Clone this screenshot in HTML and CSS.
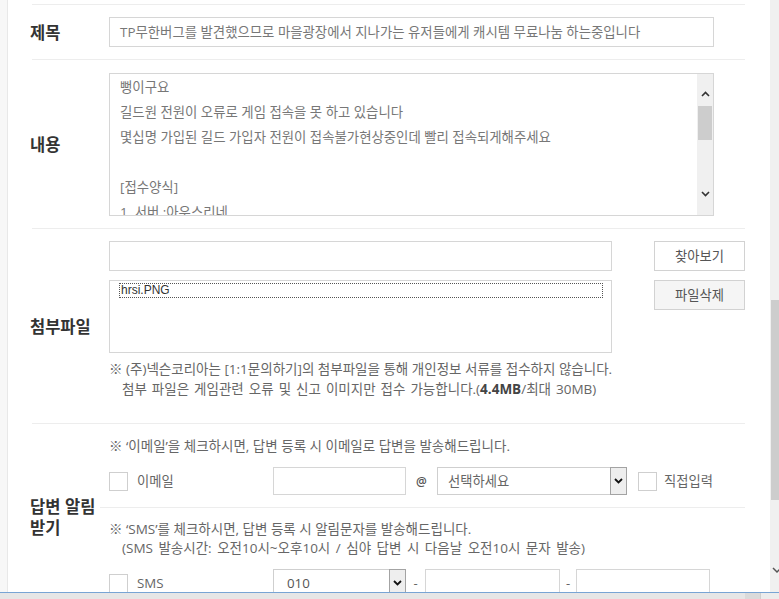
FILE: index.html
```html
<!DOCTYPE html>
<html lang="ko">
<head>
<meta charset="utf-8">
<title>1:1 문의하기</title>
<link rel="stylesheet" href="styles.css">
</head>
<body>
<div class="window">
  <div class="viewport">
    <div class="edge"></div>
    <main class="main">
      <div class="form">
        <div class="row row-title">
          <div class="label">제목</div>
          <div class="cell">
            <div class="input title-input">TP무한버그를 발견했으므로 마을광장에서 지나가는 유저들에게 캐시템 무료나눔 하는중입니다</div>
          </div>
        </div>

        <div class="row row-content">
          <div class="label">내용</div>
          <div class="cell">
            <div class="textarea">
              <div class="ta-text">
                <div class="ta-line">뻥이구요</div>
                <div class="ta-line">길드원 전원이 오류로 게임 접속을 못 하고 있습니다</div>
                <div class="ta-line">몇십명 가입된 길드 가입자 전원이 접속불가현상중인데 빨리 접속되게해주세요</div>
                <div class="ta-line">&nbsp;</div>
                <div class="ta-line">[접수양식]</div>
                <div class="ta-line">1. 서버 :아우스리네</div>
              </div>
              <div class="ta-scroll">
                <div class="ta-btn ta-up">
                  <svg width="9" height="6" viewBox="0 0 9 6"><polyline points="1,5 4.5,1.5 8,5" fill="none" stroke="#333" stroke-width="1.6"/></svg>
                </div>
                <div class="ta-thumb"></div>
                <div class="ta-gap"></div>
                <div class="ta-btn ta-down">
                  <svg width="9" height="6" viewBox="0 0 9 6"><polyline points="1,1 4.5,4.5 8,1" fill="none" stroke="#333" stroke-width="1.6"/></svg>
                </div>
              </div>
            </div>
          </div>
        </div>

        <div class="row row-attach">
          <div class="label">첨부파일</div>
          <div class="cell">
            <div class="attach-grid">
              <div class="input file-input"></div>
              <div class="btn btn-white">찾아보기</div>
              <div class="input listbox"><span class="list-item">hrsi.PNG</span></div>
              <div class="btn btn-gray">파일삭제</div>
            </div>
            <div class="notes">
              <div class="note-line">※ (주)넥슨코리아는 [1:1문의하기]의 첨부파일을 통해 개인정보 서류를 접수하지 않습니다.</div>
              <div class="note-line indent wide">첨부 파일은 게임관련 오류 및 신고 이미지만 접수 가능합니다.(<b>4.4MB</b>/최대 30MB)</div>
            </div>
          </div>
        </div>

        <div class="row row-answer">
          <div class="label">답변 알림 받기</div>
          <div class="cell answer">
            <div class="block">
              <div class="note-line">※ ‘이메일’을 체크하시면, 답변 등록 시 이메일로 답변을 발송해드립니다.</div>
              <div class="ctrl-row">
                <div class="check-wrap"><span class="checkbox"></span><span class="ctrl-text">이메일</span></div>
                <div class="input ctrl-input w-email"></div>
                <span class="at">@</span>
                <div class="select w-domain">
                  <span class="select-text">선택하세요</span>
                  <span class="select-arrow"><svg width="9" height="6" viewBox="0 0 9 6"><polyline points="1,1 4.5,4.5 8,1" fill="none" stroke="#111" stroke-width="1.8"/></svg></span>
                </div>
                <span class="checkbox cb-direct"></span><span class="ctrl-text direct">직접입력</span>
              </div>
            </div>
            <div class="block">
              <div class="note-line sms">※ ‘SMS’를 체크하시면, 답변 등록 시 알림문자를 발송해드립니다.</div>
              <div class="note-line sms indent wider">(SMS 발송시간: 오전10시~오후10시 / 심야 답변 시 다음날 오전10시 문자 발송)</div>
              <div class="ctrl-row">
                <div class="check-wrap"><span class="checkbox"></span><span class="ctrl-text">SMS</span></div>
                <div class="select w-phone1">
                  <span class="select-text dark">010</span>
                  <span class="select-arrow"><svg width="9" height="6" viewBox="0 0 9 6"><polyline points="1,1 4.5,4.5 8,1" fill="none" stroke="#111" stroke-width="1.8"/></svg></span>
                </div>
                <span class="dash d1">-</span>
                <div class="input ctrl-input w-phone2"></div>
                <span class="dash d2">-</span>
                <div class="input ctrl-input w-phone3"></div>
              </div>
            </div>
          </div>
        </div>
      </div>
    </main>
    <div class="vscroll">
      <div class="vs-thumb"></div>
      <div class="vs-gap"></div>
      <div class="vs-down"><svg width="9" height="8" viewBox="0 0 9 8"><polyline points="3,2 7,6 11,2" fill="none" stroke="#555" stroke-width="1.5"/></svg></div>
    </div>
  </div>
  <div class="statusbar">
    <div class="sb-fill"></div>
    <div class="sb-seg1"></div>
    <div class="sb-seg2"></div>
  </div>
</div>
</body>
</html>
```

FILE: styles.css
```css
* { box-sizing: border-box; }
html, body { margin: 0; padding: 0; }
body {
  width: 779px;
  height: 599px;
  overflow: hidden;
  background: #fff;
  font-family: "Open Sans", "Noto Sans CJK KR", sans-serif;
  color: #333;
}
.window { display: flex; flex-direction: column; height: 599px; }
.viewport { display: flex; height: 592px; overflow: hidden; flex: none; }
.edge { width: 8px; flex: none; background: #f7f7f7; border-right: 1px solid #e8e8e8; }
.main { flex: 1; overflow: hidden; padding-left: 24px; }
.form { width: 713px; margin-top: 4px; border-top: 1px solid #ededed; }

.row { display: flex; border-bottom: 1px solid #ededed; }
.label {
  width: 68px;
  flex: none;
  align-self: center;
  margin-left: -2px;
  font-family: "Noto Sans CJK KR", sans-serif;
  font-size: 16.5px;
  font-weight: 700;
  line-height: 21px;
  color: #333;
}
.cell { flex: 1; padding-left: 11px; }

.input { border: 1px solid #d6d6d6; background: #fff; height: 30px; }

/* title */
.row-title .cell { padding-top: 12px; padding-bottom: 12px; }
.title-input {
  width: 605px;
  padding-left: 10px;
  font-size: 13.4px;
  line-height: 28px;
  color: #777;
  white-space: nowrap;
  overflow: hidden;
}

/* content */
.row-content .cell { padding-top: 13px; padding-bottom: 12px; }
.textarea {
  width: 605px;
  height: 143px;
  border: 1px solid #d6d6d6;
  display: flex;
  overflow: hidden;
}
.ta-text {
  flex: 1;
  padding: 1px 10px 0 10px;
  font-size: 13.4px;
  line-height: 25px;
  color: #777;
  overflow: hidden;
  white-space: nowrap;
}
.ta-scroll {
  width: 16px;
  flex: none;
  background: #f0f0f0;
  display: flex;
  flex-direction: column;
}
.ta-btn { height: 32px; display: flex; justify-content: center; align-items: center; flex: none; }
.ta-up { padding-top: 8px; }
.ta-down { padding-bottom: 11px; }
.ta-btn svg { display: block; }
.ta-thumb { height: 34px; margin: 0 1px; background: #cdcdcd; flex: none; }
.ta-gap { flex: 1; }

/* attach */
.row-attach .cell { padding-top: 12px; padding-bottom: 24px; }
.attach-grid {
  display: grid;
  grid-template-columns: 503px 91px;
  column-gap: 42px;
  row-gap: 9px;
  align-items: start;
}
.listbox { height: 73px; padding: 2px 8px 0 9px; }
.list-item {
  display: block;
  height: 15px;
  border: 1px dotted #555;
  padding-left: 1px;
  font-family: "Liberation Sans", Arial, sans-serif;
  font-size: 12px;
  line-height: 13px;
  color: #333;
}
.btn {
  height: 30px;
  border: 1px solid #d2d2d2;
  font-size: 13.3px;
  line-height: 28px;
  text-align: center;
  color: #555;
}
.btn-white { background: #fff; }
.btn-gray { background: #f5f5f5; }
.notes { margin-top: 6px; }
.note-line {
  font-size: 13.5px;
  line-height: 20px;
  color: #666;
  white-space: nowrap;
}
.note-line b { color: #444; font-weight: 700; }
.note-line.indent { padding-left: 13px; }
.note-line.wide { word-spacing: 1.5px; }
.note-line.wider { word-spacing: 2px; }
.note-line.sms { line-height: 19px; }

/* answer */
.cell.answer { padding-left: 2px; }
.block { padding: 12px 0 12px 9px; }
.block + .block { border-top: 1px solid #ededed; }
.ctrl-row { display: flex; align-items: center; height: 28px; margin-top: 11px; }
.check-wrap { width: 164px; flex: none; display: flex; align-items: center; }
.checkbox { width: 19px; height: 19px; border: 1px solid #cfcfcf; background: #fff; flex: none; display: block; }
.ctrl-text { font-size: 13.3px; color: #666; margin-left: 9px; line-height: 20px; }
.ctrl-input { height: 28px; flex: none; }
.w-email { width: 133px; }
.at { width: 31px; text-align: center; font-size: 12px; font-weight: 600; color: #555; flex: none; }
.select {
  height: 28px;
  border: 1px solid #cfcfcf;
  display: flex;
  align-items: stretch;
  flex: none;
  background: #fff;
}
.select-text { flex: 1; padding-left: 10px; font-size: 13.3px; line-height: 26px; color: #666; }
.select-text.dark { color: #555; padding-left: 13px; }
.select-arrow {
  width: 17px;
  margin: -1px -1px -1px 0;
  border: 1px solid #a3a3a3;
  background: #eeeeee;
  display: flex;
  align-items: center;
  justify-content: center;
}
.select-arrow svg { display: block; }
.w-domain { width: 190px; }
.cb-direct { margin-left: 11px; }
.ctrl-text.direct { margin-left: 7px; }
.w-phone1 { width: 133px; }
.dash { flex: none; font-size: 13px; color: #666; text-align: center; }
.d1 { width: 19px; }
.d2 { width: 16px; }
.w-phone2 { width: 135px; }
.w-phone3 { width: 134px; }

/* page scrollbar */
.vscroll { width: 9px; flex: none; background: #f0f0f0; display: flex; flex-direction: column; overflow: hidden; }
.vs-thumb { margin-top: 300px; height: 200px; margin-left: 1px; background: #cdcdcd; flex: none; }
.vs-gap { flex: 1; }
.vs-down { height: 26px; flex: none; }
.vs-down svg { display: block; overflow: hidden; }

/* bottom frame */
.statusbar { height: 7px; flex: none; border-top: 1px solid #78a4d4; display: flex; background: #e6e6e6; }
.sb-fill { flex: 1; }
.sb-seg1 { width: 15px; background: #dadada; }
.sb-seg2 { width: 19px; background: #ececec; border-left: 1px solid #cfcfcf; }
```
